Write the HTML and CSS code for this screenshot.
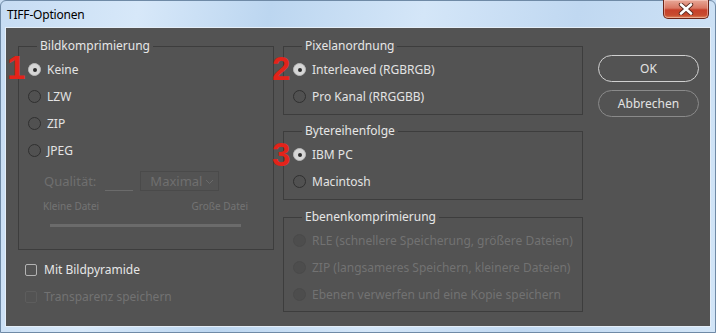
FILE: index.html
```html
<!DOCTYPE html>
<html lang="de">
<head>
<meta charset="utf-8">
<title>TIFF-Optionen</title>
<link rel="stylesheet" href="styles.css">
</head>
<body>
<div class="window">
  <div class="titlebar">
    <span class="title">TIFF-Optionen</span>
    <div class="close">
      <svg width="20" height="12" viewBox="0 0 20 12">
        <path d="M5 1.5 L15 10.5 M15 1.5 L5 10.5" stroke="#5a2a20" stroke-width="4.4" stroke-linecap="round"/>
        <path d="M5 1.5 L15 10.5 M15 1.5 L5 10.5" stroke="#ffffff" stroke-width="2.6" stroke-linecap="round"/>
      </svg>
    </div>
  </div>
  <div class="client">
    <div class="col-left">
      <fieldset class="group">
        <legend>Bildkomprimierung</legend>
        <div class="opt"><span class="radio on"></span>Keine</div>
        <div class="opt"><span class="radio"></span>LZW</div>
        <div class="opt"><span class="radio"></span>ZIP</div>
        <div class="opt"><span class="radio"></span>JPEG</div>
        <div class="quality">
          <span class="qlabel">Qualität:</span>
          <span class="qinput"></span>
          <span class="select">Maximal
            <svg class="chev" width="9" height="6" viewBox="0 0 9 6"><path d="M1 1 L4.5 4.5 L8 1" fill="none" stroke="#6a6a6a" stroke-width="1"/></svg>
          </span>
        </div>
        <div class="sizes"><span>Kleine Datei</span><span>Große Datei</span></div>
        <div class="slider"></div>
      </fieldset>
      <div class="check"><span class="box"></span>Mit Bildpyramide</div>
      <div class="check disabled"><span class="box"></span>Transparenz speichern</div>
    </div>
    <div class="col-mid">
      <fieldset class="group">
        <legend>Pixelanordnung</legend>
        <div class="opt"><span class="radio on"></span>Interleaved (RGBRGB)</div>
        <div class="opt"><span class="radio"></span>Pro Kanal (RRGGBB)</div>
      </fieldset>
      <fieldset class="group g-byte">
        <legend>Bytereihenfolge</legend>
        <div class="opt"><span class="radio on"></span>IBM PC</div>
        <div class="opt"><span class="radio"></span>Macintosh</div>
      </fieldset>
      <fieldset class="group g-layer">
        <legend>Ebenenkomprimierung</legend>
        <div class="opt disabled"><span class="radio"></span>RLE (schnellere Speicherung, größere Dateien)</div>
        <div class="opt disabled"><span class="radio"></span>ZIP (langsameres Speichern, kleinere Dateien)</div>
        <div class="opt disabled"><span class="radio"></span>Ebenen verwerfen und eine Kopie speichern</div>
      </fieldset>
    </div>
    <div class="col-btn">
      <button class="btn default">OK</button>
      <button class="btn">Abbrechen</button>
    </div>
    <span class="marker m1">1</span>
    <span class="marker m2">2</span>
    <span class="marker m3">3</span>
  </div>
</div>
</body>
</html>
```
FILE: styles.css
```css
* { box-sizing: border-box; }
html, body { margin: 0; padding: 0; }
body {
  width: 716px;
  height: 333px;
  overflow: hidden;
  background: #c8ddf3;
}
.window {
  width: 716px;
  height: 333px;
  display: flex;
  flex-direction: column;
  background:
    linear-gradient(100deg, #c6dcf3 0%, #d7e8f9 18%, #bcd6f0 35%, #d4e6f8 55%, #c0d8f1 75%, #d2e5f7 100%);
  border: 1px solid #6f8aa6;
  border-radius: 6px 6px 0 0;
}
.titlebar {
  height: 27px;
  flex: none;
  display: flex;
  align-items: flex-start;
  justify-content: space-between;
  padding-left: 6px;
}
.title {
  font-family: "Noto Sans", "Open Sans", sans-serif;
  font-size: 12px;
  line-height: 16px;
  margin-top: 6px;
  color: #000;
  letter-spacing: -0.2px;
}
.close {
  width: 46px;
  height: 19px;
  margin-top: -1px;
  margin-right: 6px;
  border: 1px solid #6b2418;
  border-top: none;
  border-radius: 0 0 5px 5px;
  background: linear-gradient(to bottom, #e8a898 0%, #d97763 45%, #c6402a 55%, #c84c2f 85%, #dd8a5e 100%);
  display: flex;
  align-items: center;
  justify-content: center;
  box-shadow: inset 0 0 0 1px rgba(255,220,210,0.45);
}
.client {
  position: relative;
  margin: 0 5px;
  height: 298px;
  flex: none;
  background: #535353;
  outline: 1px solid #e4eef8;
  display: flex;
  align-items: flex-start;
  padding: 10px 0 0 12px;
  font-family: "Noto Sans", "Open Sans", sans-serif;
  font-size: 12px;
  color: #e3e3e3;
}
.col-left { width: 256px; flex: none; }
.col-mid { width: 300px; flex: none; margin-left: 9px; }
.col-btn {
  width: 101px;
  flex: none;
  margin-left: 15px;
  padding-top: 17px;
  display: flex;
  flex-direction: column;
  gap: 8px;
}
.group {
  margin: 0;
  padding: 2px 0 4px 0;
  border: 1px solid #3d3d3d;
  min-width: 0;
}
.group legend {
  margin-left: 18px;
  padding: 0 3px;
  line-height: 16px;
  color: #e6e6e6;
}
.g-byte { margin-top: 8px; }
.g-layer { margin-top: 9px; padding-bottom: 3px; }
.opt {
  height: 27px;
  display: flex;
  align-items: center;
  padding-left: 9px;
  gap: 6px;
  white-space: nowrap;
}
.radio {
  width: 13px;
  height: 13px;
  border-radius: 50%;
  border: 1px solid #303030;
  background: #515151;
  flex: none;
  display: flex;
  align-items: center;
  justify-content: center;
}
.radio.on {
  background: #d6d6d6;
  border-color: #b9b9b9;
}
.radio.on::after {
  content: "";
  width: 4px;
  height: 4px;
  border-radius: 50%;
  background: #2b2b2b;
}
.opt.disabled { color: #727272; }
.opt.disabled .radio { border-color: #4a4a4a; background: #4d4d4d; }
.quality {
  height: 20px;
  margin-top: 7px;
  display: flex;
  align-items: center;
  padding-left: 25px;
  color: #6f6f6f;
  font-size: 13px;
}
.qinput {
  width: 28px;
  height: 20px;
  margin-left: 9px;
  border-bottom: 1px solid #6b6b6b;
}
.select {
  width: 79px;
  height: 20px;
  margin-left: 7px;
  border: 1px solid #4a4a4a;
  display: flex;
  align-items: center;
  justify-content: space-between;
  padding: 0 4px 0 9px;
}
.chev { margin-top: 2px; }
.sizes {
  height: 13px;
  margin-top: 9px;
  padding: 0 25px 0 24px;
  display: flex;
  justify-content: space-between;
  font-size: 10px;
  line-height: 13px;
  color: #737373;
}
.slider {
  height: 3px;
  margin: 11px 32px 18px 31px;
  background: #6b6b6b;
}
.check {
  height: 27px;
  display: flex;
  align-items: center;
  padding-left: 7px;
  gap: 7px;
  color: #e6e6e6;
}
.check:first-of-type { margin-top: 6px; }
.check .box {
  width: 12px;
  height: 12px;
  border: 1px solid #b3b3b3;
  border-radius: 2px;
  background: #535353;
}
.check.disabled { color: #727272; }
.check.disabled .box { border-color: #5d5d5d; }
.btn {
  height: 27px;
  border-radius: 14px;
  border: 1px solid #8a8a8a;
  background: transparent;
  font-family: "Noto Sans", "Open Sans", sans-serif;
  font-size: 12px;
  color: #e3e3e3;
  padding: 0;
}
.btn.default { border-color: #d0d0d0; }
.marker {
  position: absolute;
  font-family: "Liberation Sans", Arial, sans-serif;
  font-weight: bold;
  font-size: 33px;
  line-height: 33px;
  color: #e3231a;
}
.m1 { left: 1px; top: 23px; }
.m2 { left: 266px; top: 24px; }
.m3 { left: 266px; top: 110px; }
```
